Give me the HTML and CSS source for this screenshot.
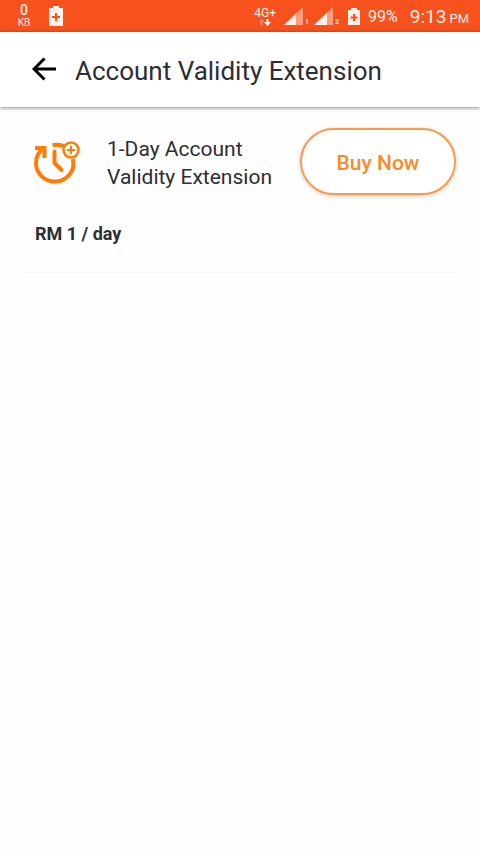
FILE: index.html
```html
<!DOCTYPE html>
<html lang="en">
<head>
<meta charset="utf-8">
<meta name="viewport" content="width=device-width, initial-scale=1">
<title>Account Validity Extension</title>
<link rel="stylesheet" href="styles.css">
</head>
<body>
<div class="status">
  <div class="traffic"><b>0</b><span>KB</span></div>
  <svg class="battery-large" viewBox="0 0 14 20" width="14" height="20"><path fill="#fff0e8" d="M4 0h6v2h4v18H0V2h4z"/><path stroke="#f7511d" stroke-width="2" d="M7 7v8M3 11h8"/></svg>
  <div class="status-right">
    <div class="network">
      <span>4G+</span>
      <svg viewBox="0 0 14 7" width="14" height="7"><path fill="#ff9270" d="M3.500 0L6.500 3H4.500V6H2.500V3H.5z"/><path fill="#fff" d="M8.500 0h2v3h2.500l-3.500 4L6 3h2.500z"/></svg>
    </div>
    <div class="signal">
      <svg viewBox="0 0 19 18" width="19" height="18"><path fill="#ff9c7c" d="M19 0v18H0z"/><path fill="#fff0e8" d="M12 6.600V18H0z"/></svg><span>1</span>
    </div>
    <div class="signal">
      <svg viewBox="0 0 19 18" width="19" height="18"><path fill="#ff9c7c" d="M19 0v18H0z"/><path fill="#fff0e8" d="M13 5.700V18H0z"/></svg><span>2</span>
    </div>
    <svg class="battery" viewBox="0 0 12 17" width="12" height="17"><path fill="#fff0e8" d="M3 0h6v2h3v15H0V2h3z"/><path stroke="#f7511d" stroke-width="2" d="M6 6v7M2.500 9.500h7"/></svg>
    <span class="percent">99%</span>
    <div class="clock"><span>9:13</span><small>PM</small></div>
  </div>
</div>
<header class="appbar">
  <button class="back" type="button" aria-label="Back">
    <svg viewBox="0 0 24 24" width="24" height="24" fill="none" stroke="#000" stroke-width="3"><path d="M24 12H2.500M12.500 1.500L2 12l10.500 10.500"/></svg>
  </button>
  <h1>Account Validity Extension</h1>
</header>
<main>
  <section class="plan">
    <div class="plan-top">
      <svg class="plan-icon" viewBox="0 0 48 44" width="48" height="44" fill="none" stroke="#ff7d05" stroke-width="4" stroke-linecap="round" stroke-linejoin="round">
        <path stroke-linecap="butt" d="M18.500 4.200C23 3.200 28 4 30.500 5.500M38.800 18C42 30 32.500 40.500 21 40.500C9.500 40.500 2 31.500 2 22C2 15.500 5 10.500 9.500 7"/>
        <path stroke-linecap="butt" stroke-linejoin="miter" d="M1 7h9.500v10"/>
        <path d="M20.500 10.500v11.500l7 7"/>
        <circle cx="37" cy="9" r="7.500" stroke-width="2.500"/>
        <path stroke-width="2" d="M37 5.500v7M33.500 9h7"/>
      </svg>
      <h2>1-Day Account Validity Extension</h2>
      <button class="buy" type="button">Buy Now</button>
    </div>
    <p class="price">RM 1 / day</p>
  </section>
</main>
</body>
</html>
```
FILE: styles.css
```css
* { box-sizing: border-box; }
body {
  margin: 0;
  min-height: 100vh;
  background: #fefefe;
  color: #2d2d32;
  font-family: Roboto, "Liberation Sans", sans-serif;
}
h1, h2, p { margin: 0; }
svg { display: block; flex: none; }

.status {
  display: flex;
  align-items: center;
  height: 32px;
  padding: 0 11px 0 17px;
  background: #f7511d;
  color: #fff0e8;
}
.traffic {
  display: flex;
  flex-direction: column;
  align-items: center;
  width: 14px;
  margin-right: 18px;
  font-size: 10px;
  line-height: 11px;
}
.traffic b { font-size: 14px; line-height: 13px; font-weight: 500; }
.status-right {
  display: flex;
  align-items: center;
  margin-left: auto;
}
.network {
  display: flex;
  flex-direction: column;
  align-items: center;
  margin-right: 8px;
  font-size: 12px;
  line-height: 12px;
}
.signal {
  display: flex;
  align-items: flex-end;
  gap: 2px;
  width: 30px;
  font-size: 7px;
  line-height: 6px;
  font-weight: 700;
}
.battery { margin: 0 8px 0 4px; }
.percent { margin-right: 12px; font-size: 16px; }
.clock { display: flex; align-items: baseline; gap: 3px; font-size: 19px; }
.clock small { font-size: 13px; }

.appbar {
  display: flex;
  align-items: center;
  gap: 19px;
  height: 75px;
  padding: 2px 32px 0;
  background: #fff;
  box-shadow: 0 1px 4px rgba(0, 0, 0, .45);
}
.back {
  padding: 0 0 4px;
  border: 0;
  background: none;
}
h1 { font-size: 26px; line-height: 32px; font-weight: 400; white-space: nowrap; }

.plan {
  margin: 0 24px;
  padding: 21px 0 25px;
  border-bottom: 1px solid #f7f7f7;
}
.plan-top { display: flex; align-items: center; }
.plan-icon { margin: 2px 0 0 10px; }
h2 {
  flex: 1;
  margin: 2px 16px 0 25px;
  font-size: 21px;
  line-height: 28px;
  font-weight: 400;
}
.buy {
  width: 156px;
  height: 67px;
  padding-top: 3px;
  border: 2px solid #f99b48;
  border-radius: 34px;
  background: #fff;
  color: #fa8b24;
  font: 500 21px/28px Roboto, "Liberation Sans", sans-serif;
  box-shadow: 0 1px 4px rgba(0, 0, 0, .2);
}
.price {
  margin: 26px 0 0 11px;
  font-size: 18px;
  line-height: 26px;
  font-weight: 700;
}
```
